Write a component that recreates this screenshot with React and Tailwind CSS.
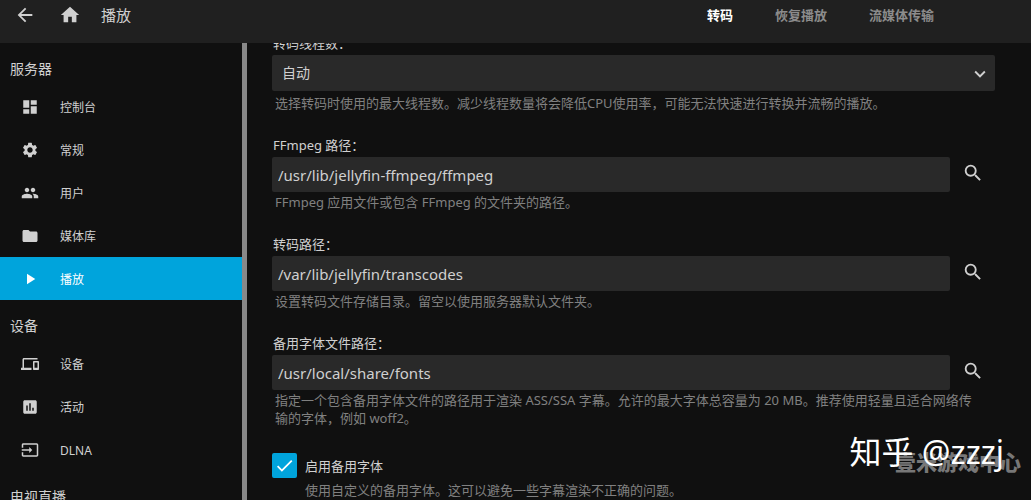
import { useState } from "react";
import {
  MdArrowBack,
  MdAssessment,
  MdCheck,
  MdDashboard,
  MdDevices,
  MdFolder,
  MdHome,
  MdInput,
  MdKeyboardArrowDown,
  MdPeople,
  MdPlayArrow,
  MdSearch,
  MdSettings,
} from "react-icons/md";

const SECTIONS = [
  {
    title: "服务器",
    items: [
      { label: "控制台", Icon: MdDashboard },
      { label: "常规", Icon: MdSettings },
      { label: "用户", Icon: MdPeople },
      { label: "媒体库", Icon: MdFolder },
      { label: "播放", Icon: MdPlayArrow, active: true },
    ],
  },
  {
    title: "设备",
    items: [
      { label: "设备", Icon: MdDevices },
      { label: "活动", Icon: MdAssessment },
      { label: "DLNA", Icon: MdInput },
    ],
  },
  { title: "电视直播", items: [] },
];

const TABS = ["转码", "恢复播放", "流媒体传输"];

const Header = () => {
  const [tab, setTab] = useState(TABS[0]);

  return (
    <header className="flex h-[43px] shrink-0 items-start justify-between bg-[#202020] pr-[97px] pl-[14px]">
      <div className="flex h-[30px] items-center">
        <button aria-label="返回"><MdArrowBack size={22} /></button>
        <button aria-label="主页" className="ml-[23px]"><MdHome size={22} /></button>
        <h1 className="ml-5 text-[15px]">播放</h1>
      </div>
      <nav className="flex h-8 items-center gap-[42px]">
        {TABS.map((name) => (
          <button
            key={name}
            onClick={() => setTab(name)}
            className={name === tab ? "text-[13px] font-bold text-white" : "text-[13px] font-bold text-[#8c8c8c]"}
          >
            {name}
          </button>
        ))}
      </nav>
    </header>
  )
}

const Sidebar = () => (
  <aside className="w-[247px] shrink-0 overflow-hidden border-r-5 border-[#888888]">
    {SECTIONS.map(({ title, items }) => (
      <section key={title}>
        <h2 className="flex h-[42px] items-center pt-2 pl-[10px] text-[14px]">{title}</h2>
        {items.map(({ label, Icon, active }) => (
          <a
            key={label}
            href="#"
            className={
              active
                ? "flex h-[43px] items-center gap-[21px] bg-[#00a4dc] pl-[21px] text-[12px] text-white"
                : "flex h-[43px] items-center gap-[21px] pl-[21px] text-[12px]"
            }
          >
            <Icon size={18} />
            <span className="pt-[2px]">{label}</span>
          </a>
        ))}
      </section>
    ))}
  </aside>
)

const PathField = ({ id, label, value, children }) => (
  <div className="mb-6">
    <label htmlFor={id} className="mb-[3px] block pl-px">{label}&#xFF1A;</label>
    <div className="flex items-center">
      <input
        id={id}
        type="text"
        defaultValue={value}
        className="h-[35px] min-w-0 flex-1 rounded-xs bg-[#292929] px-[6px] text-[15px] outline-none"
      />
      <button aria-label="浏览" className="flex w-[45px] justify-center pb-1">
        <MdSearch size={22} />
      </button>
    </div>
    <p className="mt-px pr-3 pl-[3px] text-[#808080]">{children}</p>
  </div>
)

const Settings = () => (
  <main className="min-w-0 flex-1 overflow-hidden pr-9 pl-[25px]">
    <form className="-mt-[9px] text-[13px] leading-[18px]">
      <div className="mb-6">
        <label htmlFor="threads" className="mb-[3px] block pl-px">转码线程数&#xFF1A;</label>
        <div className="relative">
          <select
            id="threads"
            className="h-9 w-full appearance-none rounded-xs bg-[#292929] px-[10px] text-[14px] outline-none"
          >
            <option>自动</option>
          </select>
          <MdKeyboardArrowDown size={22} className="pointer-events-none absolute top-2 right-1" />
        </div>
        <p className="mt-[3px] pl-[3px] text-[#808080]">
          选择转码时使用的最大线程数。减少线程数量将会降低CPU使用率&#xFF0C;可能无法快速进行转换并流畅的播放。
        </p>
      </div>

      <PathField id="ffmpeg" label="FFmpeg 路径" value="/usr/lib/jellyfin-ffmpeg/ffmpeg">
        FFmpeg 应用文件或包含 FFmpeg 的文件夹的路径。
      </PathField>

      <PathField id="transcodes" label="转码路径" value="/var/lib/jellyfin/transcodes">
        设置转码文件存储目录。留空以使用服务器默认文件夹。
      </PathField>

      <PathField id="fonts" label="备用字体文件路径" value="/usr/local/share/fonts">
        指定一个包含备用字体文件的路径用于渲染 ASS/SSA 字幕。允许的最大字体总容量为 20 MB。推荐使用轻量且适合网络传输的字体&#xFF0C;例如 woff2。
      </PathField>

      <div className="flex items-center gap-2 pt-[2px]">
        <span className="relative flex">
          <input
            id="fallback"
            type="checkbox"
            defaultChecked
            className="peer size-[25px] appearance-none rounded-xs border-2 border-[#00a4dc] checked:bg-[#00a4dc]"
          />
          <MdCheck size={21} className="pointer-events-none absolute top-[2px] left-[2px] hidden text-white peer-checked:block" />
        </span>
        <label htmlFor="fallback">启用备用字体</label>
      </div>
      <p className="mt-[3px] pl-[33px] text-[#808080]">
        使用自定义的备用字体。这可以避免一些字幕渲染不正确的问题。
      </p>
    </form>
  </main>
)

const Watermarks = () => (
  <div className="pointer-events-none whitespace-nowrap">
    <span className="absolute right-[10px] bottom-6 text-[21px] leading-7 font-black text-[#777777]">壹米游戏中心</span>
    <span className="absolute right-[27px] bottom-7 text-[32px] leading-10 text-white">知乎 @zzzj</span>
  </div>
)

export default function App() {
  return (
    <div
      lang="zh-CN"
      className="relative flex h-screen flex-col overflow-hidden bg-[#101010] font-['Noto_Sans','Noto_Sans_CJK_SC',sans-serif] text-[#d0d0d0]"
    >
      <Header />
      <div className="flex min-h-0 flex-1">
        <Sidebar />
        <Settings />
      </div>
      <Watermarks />
    </div>
  )
}
